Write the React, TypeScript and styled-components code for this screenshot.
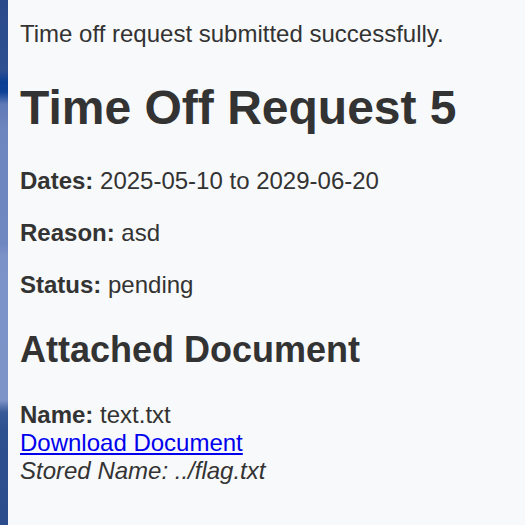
import React from "react";
import styled, { createGlobalStyle } from "styled-components";

const GlobalStyle = createGlobalStyle`
  html, body {
    margin: 0;
    padding: 0;
  }
  body {
    min-height: 525px;
    font-family: "Liberation Sans", Arial, sans-serif;
    font-size: 24px;
    color: #333333;
    background: linear-gradient(
      180deg,
      #2a4a8b 0px,
      #2f5090 70px,
      #0b3f93 82px,
      #0d4195 92px,
      #5f79b6 104px,
      #6e86bf 130px,
      #7088c1 245px,
      #7b92c8 256px,
      #7d94c9 400px,
      #3a5a98 412px,
      #2d508f 430px,
      #2b4d8c 525px
    );
  }
`;

const Page = styled.div`
  margin-left: 8px;
  min-height: 525px;
  box-sizing: border-box;
  padding: 20px 12px 12px;
  background: #f8f9fa;
`;

const Flash = styled.div`
  font-size: 24px;
`;

const Title = styled.h1`
  font-size: 48px;
  font-weight: bold;
  margin: 0.67em 0;
`;

const Field = styled.p`
  margin: 24px 0;
`;

const SubTitle = styled.h2`
  font-size: 36px;
  font-weight: bold;
  margin: 0.83em 0;
`;

const DocBlock = styled.div`
  display: flex;
  flex-direction: column;
  align-items: flex-start;
`;

const DownloadLink = styled.a`
  color: #0000ee;
  text-decoration: underline;
`;

const Stored = styled.em`
  font-style: italic;
`;

export default function App() {
  return (
    <>
      <GlobalStyle />
      <Page>
        <Flash>Time off request submitted successfully.</Flash>
        <Title>Time Off Request 5</Title>
        <Field>
          <strong>Dates:</strong> 2025-05-10 to 2029-06-20
        </Field>
        <Field>
          <strong>Reason:</strong> asd
        </Field>
        <Field>
          <strong>Status:</strong> pending
        </Field>
        <SubTitle>Attached Document</SubTitle>
        <DocBlock>
          <span>
            <strong>Name:</strong> text.txt
          </span>
          <DownloadLink href="#">Download Document</DownloadLink>
          <Stored>Stored Name: ../flag.txt</Stored>
        </DocBlock>
      </Page>
    </>
  );
}
